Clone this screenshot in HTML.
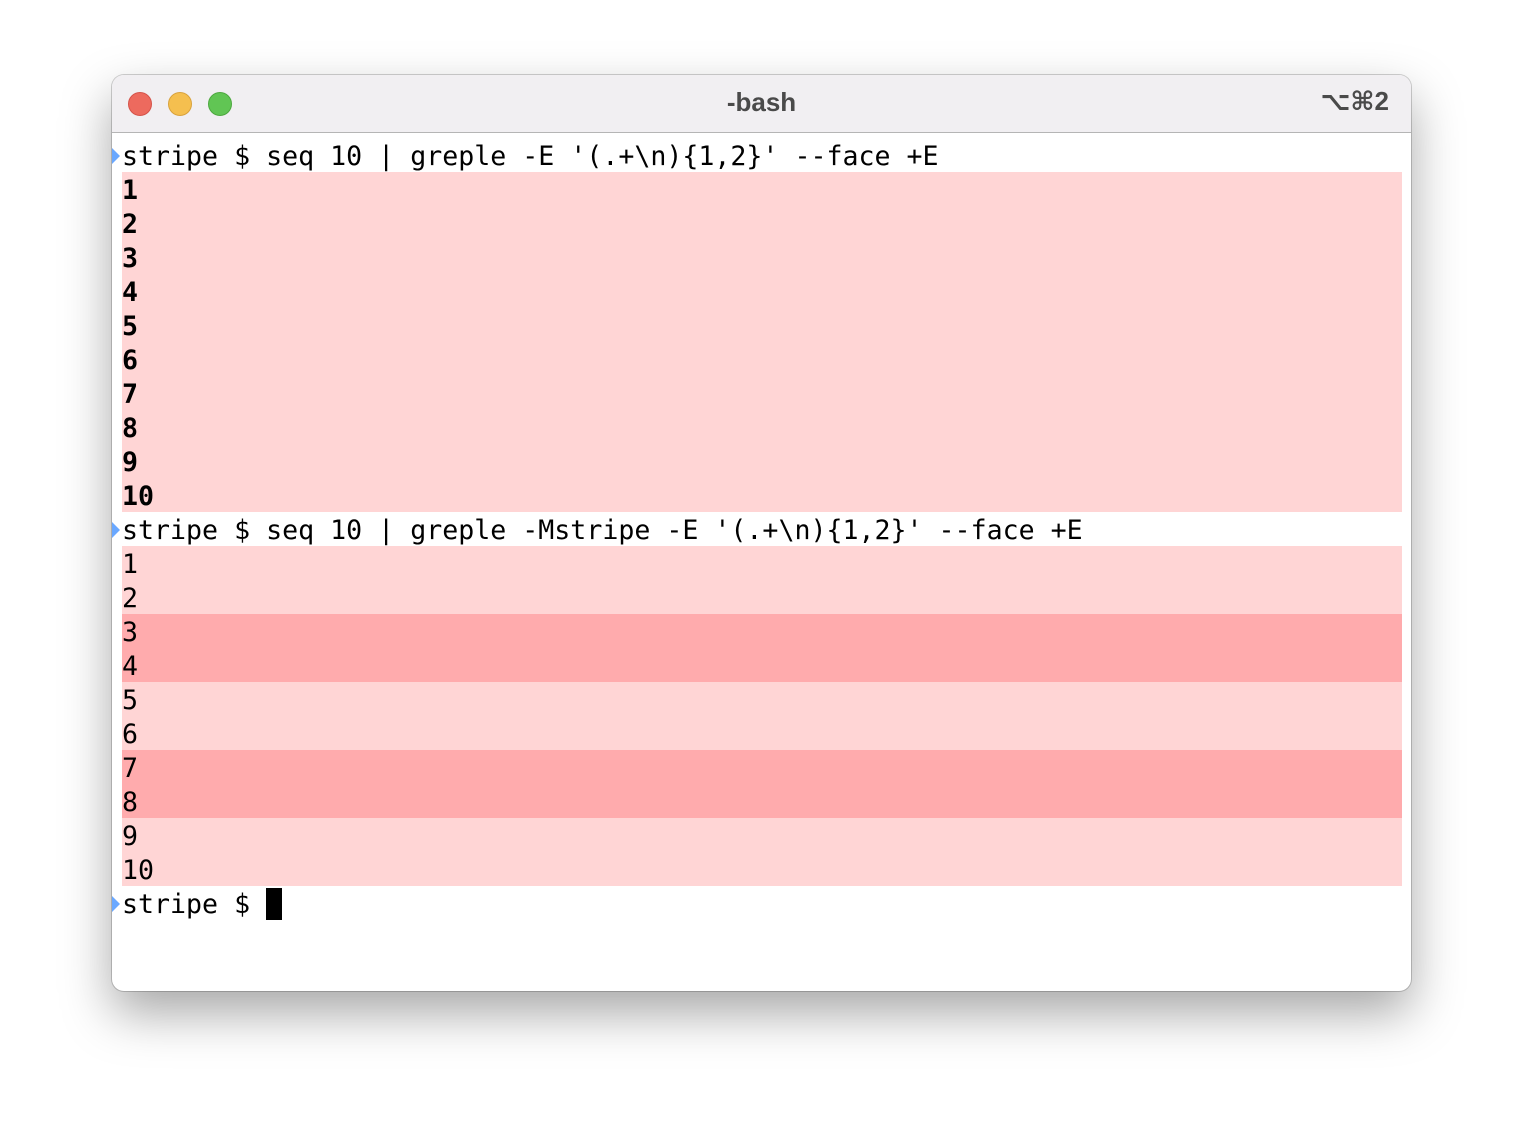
<!DOCTYPE html>
<html><head><style>
body{margin:0;width:1524px;height:1140px;background:#fff;position:relative;overflow:hidden}
.win{position:absolute;left:112px;top:75px;width:1299px;height:916px;border-radius:12px;background:#fff;box-shadow:0 22px 50px rgba(0,0,0,.35),0 0 0 1px rgba(0,0,0,.18);overflow:hidden}
.tb{position:absolute;left:0;top:0;width:100%;height:57px;background:#f1eff2;border-bottom:1px solid #b5b5b5}
.d{position:absolute;top:17px;width:23px;height:23px;border-radius:50%}
.title{position:absolute;top:12px;width:100%;text-align:center;font:bold 26px "Liberation Sans",sans-serif;color:#4a4a4a}
.sc{position:absolute;right:22px;top:11px;font:bold 26px "Liberation Sans","DejaVu Sans",sans-serif;color:#4a4a4a}
.t{position:absolute;left:10px;top:63px;font:26.6px/34px "DejaVu Sans Mono",monospace;color:#000;white-space:pre}
.r{height:34px;width:1280px}
.r span.x{position:relative;top:2px}
.a{background:#ffd5d5}.b{background:#ffabad}
.bold{font-weight:bold}
.mk{position:absolute;left:0;width:0;height:0;border-left:8px solid #6aa8ff;border-top:8px solid transparent;border-bottom:8px solid transparent}
.cur{display:inline-block;width:16px;height:32px;background:#000;vertical-align:-7px}
</style></head><body>
<div class="win">
<div class="tb">
<div class="d" style="left:16px;background:#ed6a5e;border:1px solid #d5534a;width:22px;height:22px"></div>
<div class="d" style="left:56px;background:#f5bf4f;border:1px solid #d9a23c;width:22px;height:22px"></div>
<div class="d" style="left:96px;background:#61c554;border:1px solid #4da83f;width:22px;height:22px"></div>
<div class="title">-bash</div>
<div class="sc">⌥⌘2</div>
</div>
<div class="mk" style="top:73px"></div>
<div class="mk" style="top:447px"></div>
<div class="mk" style="top:821px"></div>
<div class="t"><div class="r"><span class="x">stripe $ seq 10 | greple -E '(.+\n){1,2}' --face +E</span></div><div class="bold"><div class="r a"><span class="x">1</span></div><div class="r a"><span class="x">2</span></div><div class="r a"><span class="x">3</span></div><div class="r a"><span class="x">4</span></div><div class="r a"><span class="x">5</span></div><div class="r a"><span class="x">6</span></div><div class="r a"><span class="x">7</span></div><div class="r a"><span class="x">8</span></div><div class="r a"><span class="x">9</span></div><div class="r a"><span class="x">10</span></div></div><div class="r"><span class="x">stripe $ seq 10 | greple -Mstripe -E '(.+\n){1,2}' --face +E</span></div><div class="r a"><span class="x">1</span></div><div class="r a"><span class="x">2</span></div><div class="r b"><span class="x">3</span></div><div class="r b"><span class="x">4</span></div><div class="r a"><span class="x">5</span></div><div class="r a"><span class="x">6</span></div><div class="r b"><span class="x">7</span></div><div class="r b"><span class="x">8</span></div><div class="r a"><span class="x">9</span></div><div class="r a"><span class="x">10</span></div><div class="r"><span class="x">stripe $ <span class="cur"></span></span></div></div>
</div>
</body></html>
